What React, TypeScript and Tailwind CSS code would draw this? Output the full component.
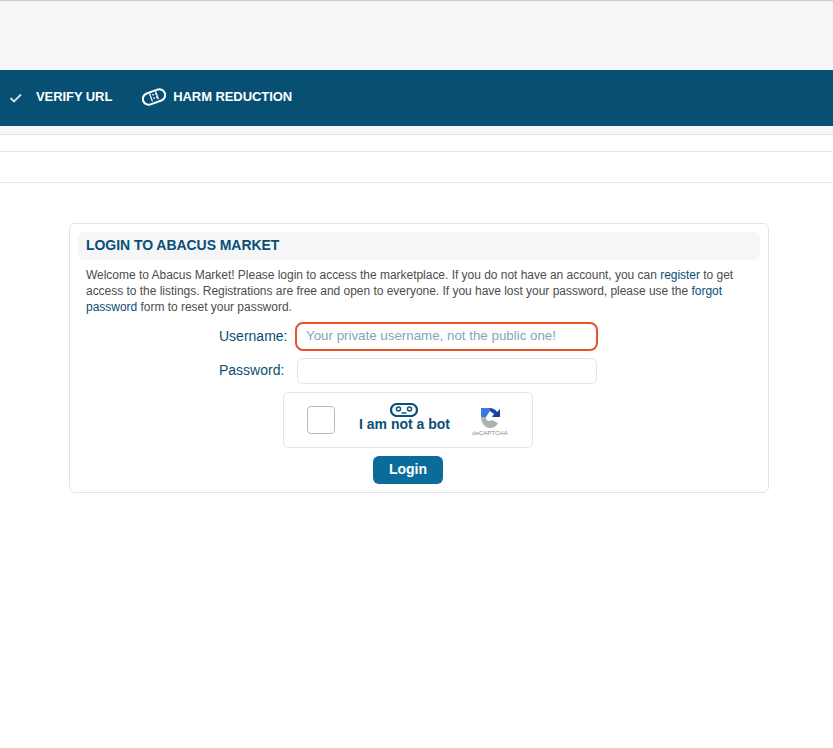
function BandageIcon() {
  return (
    <svg width="24" height="18" viewBox="0 0 24 18" fill="none" stroke="currentColor" strokeWidth="2">
      <rect x="0.5" y="3.2" width="23" height="11.6" rx="5.8" transform="rotate(-20 12 9)" />
      <path d="M7.6 5.6 L10.4 13.4 M13.6 3.4 L16.4 11.2" strokeWidth="1.3" />
      <g fill="currentColor" stroke="none">
        <rect x="10.4" y="6" width="1.5" height="1.5" />
        <rect x="13" y="5.1" width="1.5" height="1.5" />
        <rect x="11.4" y="9.4" width="1.5" height="1.5" />
        <rect x="14" y="8.5" width="1.5" height="1.5" />
      </g>
    </svg>
  );
}

function BotFace() {
  return (
    <svg width="28" height="14" viewBox="0 0 28 14" fill="none" className="text-[#0a5078] mr-[2px]">
      <rect x="1" y="1" width="26" height="12" rx="6" stroke="currentColor" strokeWidth="2.2" />
      <circle cx="8.5" cy="6" r="2" stroke="currentColor" strokeWidth="1.5" />
      <circle cx="19.5" cy="6" r="2" stroke="currentColor" strokeWidth="1.5" />
      <path d="M11.5 10 H16.5" stroke="currentColor" strokeWidth="1.5" />
    </svg>
  );
}

function CaptchaLogo() {
  return (
    <div className="flex flex-col items-center w-[36px] mt-[3px]">
      <svg width="22" height="22" viewBox="0 0 22 22" fill="none">
        <path d="M2 1 H10 L11 4 L9 7 L7 10 H2 Z" fill="#3a78dc" />
        <path d="M10 1 C14 1 17 3 18 5 L21 2 V10 H13 L15 7 L11 4 Z" fill="#1c3fa6" />
        <path d="M2 10 H7 C7 12 8 14 10 14 L13 13 L15 14 L19 16 C17 20 14 21 11 21 C6 21 2 16 2 10 Z" fill="#b0b0b0" />
      </svg>
      <span className="text-[6px] leading-[8px] text-[#8a8a8a] whitespace-nowrap">deCAPTCHA</span>
    </div>
  );
}

export default function App() {
  return (
    <div className="min-h-[748px] bg-white font-['Liberation_Sans',Arial,sans-serif] text-xs text-[#4d4d4d]">
      <div className="h-[70px] bg-[#f5f6f8] border-t border-[#c9cbce]" />
      <nav className="h-14 bg-[#084f74] flex items-start text-white font-bold text-[13px] tracking-[-0.08px]">
        <div className="flex items-center pl-[9px] pt-[20px]">
          <svg width="14" height="12" viewBox="0 0 14 12" fill="none" stroke="#d5e0e7" strokeWidth="1.9" className="mt-[2px]">
            <path d="M1.5 6 L5 9.5 L12 2.5" />
          </svg>
          <span className="ml-[13px] leading-[15px] -mt-px">VERIFY URL</span>
        </div>
        <div className="flex items-center ml-[30px] pt-[18px]">
          <BandageIcon />
          <span className="ml-[7px] leading-[15px] -mt-[2px]">HARM REDUCTION</span>
        </div>
      </nav>
      <div className="h-[9px] bg-[#f5f6f8] border-b border-[#e5e5e5]" />
      <div className="h-[17px] border-b border-[#e5e5e5]" />
      <div className="h-[31px] border-b border-[#e5e5e5]" />

      <main className="pt-10 pl-[69px]">
        <section className="w-[700px] h-[270px] border border-[#e3e3e3] rounded-md p-2">
          <h2 className="h-7 bg-[#f5f6f8] rounded-md pl-2 text-sm font-bold leading-[26px] tracking-[-0.05px] text-[#084f74]">
            LOGIN TO ABACUS MARKET
          </h2>
          <p className="mt-[7px] px-2 leading-4 tracking-[-0.025px]">
            Welcome to Abacus Market! Please login to access the marketplace. If you do not have an account, you can{" "}
            <a className="text-[#084f74]">register</a> to get access to the listings. Registrations are free and open to
            everyone. If you have lost your password, please use the <a className="text-[#084f74]">forgot password</a>{" "}
            form to reset your password.
          </p>
          <form className="mt-[7px] pr-5 flex flex-col items-center">
            <div className="flex items-center w-[380px] h-[29px] ml-[-2px]">
              <label className="w-[77px] pl-[1px] pb-[2px] text-sm text-[#084f74] whitespace-nowrap">Username:</label>
              <input
                placeholder="Your private username, not the public one!"
                className="w-[303px] h-[29px] rounded-lg border-2 border-[#e8522a] bg-white px-[9px] pb-[2px] text-[13.33px] outline-none placeholder:text-[#7fa5bd]"
              />
            </div>
            <div className="flex items-center w-[380px] h-[26px] mt-[7px] ml-[-2px]">
              <label className="w-[79px] pl-[1px] pb-[2px] text-sm text-[#084f74] whitespace-nowrap">Password:</label>
              <input
                type="password"
                className="w-[300px] h-[26px] rounded-md border border-[#e3e3e3] bg-white outline-none"
              />
            </div>
            <div className="mt-2 ml-[-2px] flex items-center w-[250px] h-[56px] rounded-md border border-[#e3e3e3]">
              <div className="ml-[23px] w-7 h-7 rounded border border-[#bbb] bg-white" />
              <div className="ml-[23px] mb-[6px] flex flex-col items-center w-[93px]">
                <BotFace />
                <span className="text-sm font-bold leading-[16px] text-[#0a5078] whitespace-nowrap -mt-px">
                  I am not a bot
                </span>
              </div>
              <div className="ml-[21px]">
                <CaptchaLogo />
              </div>
            </div>
            <button
              type="button"
              className="mt-2 ml-[-2px] w-[70px] h-7 pb-[2px] rounded-md bg-[#0a6c9b] text-sm font-bold text-white"
            >
              Login
            </button>
          </form>
        </section>
      </main>
    </div>
  );
}
